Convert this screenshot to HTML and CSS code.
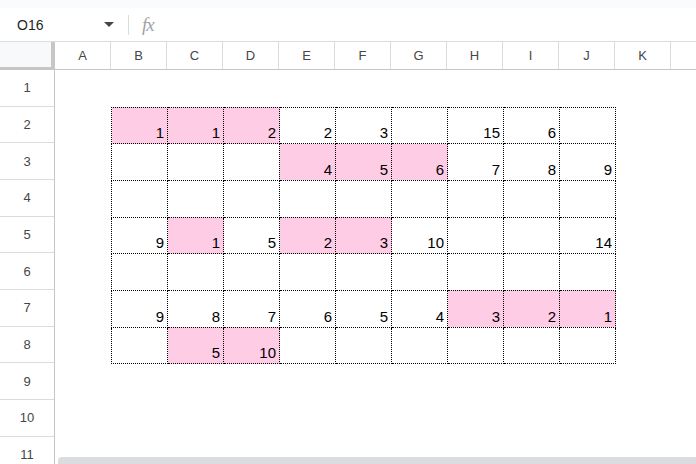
FILE: index.html
```html
<!DOCTYPE html>
<html lang="en">
<head>
    <meta charset="UTF-8">
    <meta name="viewport" content="width=device-width, initial-scale=1.0">
    <title>Sheet</title>
    <link rel="stylesheet" href="styles.css">
</head>
<body>

<div class="app">
    <div class="topbar"></div>

    <div class="formula-bar">
        <div class="name-box">
            <span>O16</span>
            <span class="caret"></span>
        </div>
        <div class="divider"></div>
        <div class="fx">fx</div>
    </div>

    <div class="col-headers">
        <div class="corner"></div>
        <div class="col">A</div>
        <div class="col">B</div>
        <div class="col">C</div>
        <div class="col">D</div>
        <div class="col">E</div>
        <div class="col">F</div>
        <div class="col">G</div>
        <div class="col">H</div>
        <div class="col">I</div>
        <div class="col">J</div>
        <div class="col">K</div>
        <div class="col rest"></div>
    </div>

    <div class="body">
        <div class="row-headers">
            <div class="row">1</div>
            <div class="row">2</div>
            <div class="row">3</div>
            <div class="row">4</div>
            <div class="row">5</div>
            <div class="row">6</div>
            <div class="row">7</div>
            <div class="row">8</div>
            <div class="row">9</div>
            <div class="row">10</div>
            <div class="row">11</div>
        </div>

        <div class="cells">
            <table class="board">
                <tr>
                    <td class="hl">1</td><td class="hl">1</td><td class="hl">2</td>
                    <td>2</td><td>3</td><td></td><td>15</td><td>6</td><td></td>
                </tr>
                <tr>
                    <td></td><td></td><td></td>
                    <td class="hl">4</td><td class="hl">5</td><td class="hl">6</td><td>7</td><td>8</td><td>9</td>
                </tr>
                <tr>
                    <td></td><td></td><td></td><td></td><td></td><td></td><td></td><td></td><td></td>
                </tr>
                <tr>
                    <td>9</td><td class="hl">1</td><td>5</td>
                    <td class="hl">2</td><td class="hl">3</td><td>10</td><td></td><td></td><td>14</td>
                </tr>
                <tr>
                    <td></td><td></td><td></td><td></td><td></td><td></td><td></td><td></td><td></td>
                </tr>
                <tr>
                    <td>9</td><td>8</td><td>7</td><td>6</td><td>5</td><td>4</td>
                    <td class="hl">3</td><td class="hl">2</td><td class="hl">1</td>
                </tr>
                <tr>
                    <td></td><td class="hl">5</td><td class="hl">10</td>
                    <td></td><td></td><td></td><td></td><td></td><td></td>
                </tr>
            </table>
        </div>
    </div>

    <div class="scrollbar"></div>
</div>

</body>
</html>
```

FILE: styles.css
```css
* {
    margin: 0;
    padding: 0;
    box-sizing: border-box;
    font-family: "Liberation Sans", Arial, sans-serif;
}

body {
    width: 696px;
    height: 464px;
    overflow: hidden;
    background: #fff;
}

.app {
    position: relative;
    width: 696px;
    height: 464px;
    overflow: hidden;
}

.topbar {
    height: 8px;
    background: #f9fbfd;
}

.formula-bar {
    display: flex;
    align-items: center;
    height: 33px;
    background: #fff;
}

.name-box {
    display: flex;
    align-items: center;
    justify-content: space-between;
    width: 117px;
    padding-left: 17px;
    padding-right: 3px;
    font-size: 14px;
    color: #1f1f1f;
}

.caret {
    width: 0;
    height: 0;
    border-left: 5px solid transparent;
    border-right: 5px solid transparent;
    border-top: 5px solid #444746;
}

.divider {
    width: 1px;
    height: 20px;
    margin-left: 11px;
    background: #dadce0;
}

.fx {
    margin-left: 13px;
    font-family: "Liberation Serif", "Times New Roman", serif;
    font-style: italic;
    font-size: 19px;
    color: #a0a3a7;
    letter-spacing: -1px;
}

.col-headers {
    display: flex;
    height: 29px;
    border-top: 1px solid #dadce0;
    border-bottom: 1px solid #c4c7c5;
}

.corner {
    width: 55px;
    flex: none;
    background: #f8f9fa;
    border-right: 4px solid #c4c7c5;
    border-bottom: 3px solid #c4c7c5;
    margin-bottom: -1px;
}

.col {
    width: 56px;
    flex: none;
    display: flex;
    align-items: center;
    justify-content: center;
    border-right: 1px solid #dadce0;
    font-size: 13px;
    color: #444746;
}

.col.rest {
    flex: 1;
    border-right: none;
}

.body {
    display: flex;
}

.row-headers {
    width: 55px;
    flex: none;
    border-right: 1px solid #c4c7c5;
}

.row {
    height: 36.67px;
    display: flex;
    align-items: center;
    justify-content: center;
    border-bottom: 1px solid #dadce0;
    font-size: 13px;
    color: #444746;
}

.cells {
    flex: 1;
    padding-top: 36.67px;
    padding-left: 56px;
}

.board {
    border-collapse: collapse;
}

.board td {
    width: 56px;
    height: 36.67px;
    padding: 0 3px 2px 0;
    border: 1px dotted #000;
    text-align: right;
    vertical-align: bottom;
    font-size: 15px;
    color: #000;
}

.board td.hl {
    background: #ffcce6;
}

.scrollbar {
    position: absolute;
    left: 58px;
    right: 0;
    bottom: 0;
    height: 7px;
    background: #dadce0;
    border-radius: 4px 0 0 0;
}
```
